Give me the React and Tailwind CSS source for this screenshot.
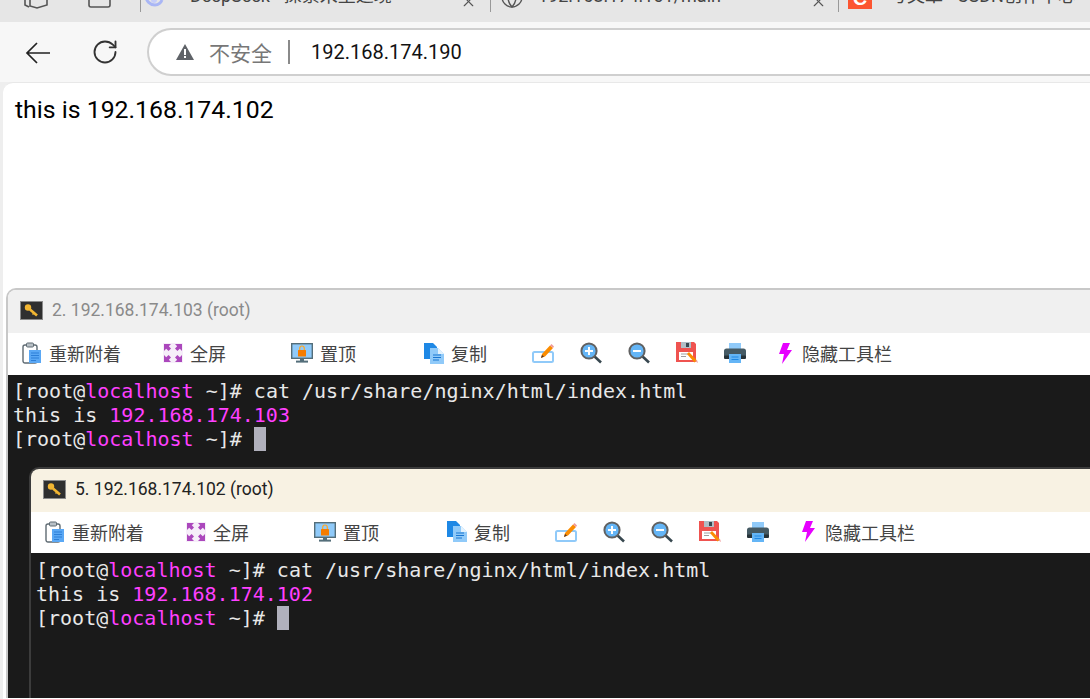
import { RotateCw, X, Globe } from "lucide-react";

const uiFont = "font-['Roboto','Noto_Sans_CJK_SC',sans-serif]";
const cjkFont = "font-['Noto_Sans_CJK_SC',sans-serif]";

function KeyIcon() {
  return (
    <svg width="23" height="19" viewBox="0 0 23 19" className="shrink-0">
      <rect x="0.5" y="0.5" width="22" height="18" fill="#2f2f2f" stroke="#8a8a8a" />
      <circle cx="8" cy="6.5" r="3.2" fill="#f2b632" />
      <path d="M10 8.5 L17 14.5" stroke="#f2b632" strokeWidth="2.6" />
      <path d="M14 12 L12.5 13.5" stroke="#f2b632" strokeWidth="1.5" />
    </svg>
  );
}

function ClipboardIcon() {
  return (
    <svg width="20" height="22" viewBox="0 0 20 22">
      <rect x="1" y="3" width="14" height="18" rx="2" fill="#fff" stroke="#5f6b73" strokeWidth="1.4" />
      <rect x="4.5" y="1" width="7" height="4" rx="1" fill="#b8c0c6" stroke="#5f6b73" />
      <rect x="7" y="8" width="12" height="13" fill="#5aa8f5" />
      <path d="M9 11h8M9 13.5h8M9 16h8M9 18.5h5" stroke="#2d7fd8" strokeWidth="1.1" />
    </svg>
  );
}

function FullscreenIcon() {
  return (
    <svg width="20" height="20" viewBox="0 0 20 20">
      <rect width="20" height="20" fill="#f6eef9" />
      <g fill="#ab47bc">
        <path d="M1 1h7L5.8 3.2 8 5.6 5.6 8 3.2 5.8 1 8z" />
        <path d="M19 1h-7l2.2 2.2L12 5.6 14.4 8l2.4-2.2L19 8z" />
        <path d="M1 19h7l-2.2-2.2L8 14.4 5.6 12l-2.4 2.2L1 12z" />
        <path d="M19 19h-7l2.2-2.2-2.2-2.4 2.4-2.4 2.4 2.2L19 12z" />
      </g>
    </svg>
  );
}

function PinIcon() {
  return (
    <svg width="22" height="20" viewBox="0 0 22 20">
      <rect x="0.7" y="0.7" width="20.6" height="14.6" fill="#90caf9" stroke="#546e7a" strokeWidth="1.4" />
      <rect x="9" y="15" width="4" height="3" fill="#546e7a" />
      <rect x="5" y="17.6" width="12" height="2" fill="#546e7a" />
      <rect x="7" y="7" width="8" height="6.5" rx="0.6" fill="#f57c00" />
      <path d="M8.7 7V5.3a2.3 2.3 0 0 1 4.6 0V7" fill="none" stroke="#ffa726" strokeWidth="1.2" />
    </svg>
  );
}

function CopyIcon() {
  return (
    <svg width="20" height="21" viewBox="0 0 20 21">
      <path d="M0 0h9l4 4v12H0z" fill="#1e88e5" />
      <path d="M6 5h8l6 6v10H6z" fill="#90caf9" />
      <path d="M14 5l6 6h-6z" fill="#e3f2fd" />
      <path d="M9 12h8M9 14.5h8M9 17h6" stroke="#1976d2" strokeWidth="1.1" />
    </svg>
  );
}

function EditIcon() {
  return (
    <svg width="22" height="20" viewBox="0 0 22 20">
      <rect x="1" y="9" width="20" height="10" rx="1.5" fill="#fff" stroke="#90caf9" strokeWidth="2" />
      <path d="M9 15l1-4L18 2.5l3 2.5-8 8.5z" fill="#fb8c00" />
      <path d="M18 2.5l1.5-1.5 2.5 2.5L21 5z" fill="#ef9a9a" />
      <path d="M9 15l1-3 2 1.5z" fill="#4e342e" />
    </svg>
  );
}

function ZoomIcon({ plus }) {
  return (
    <svg width="22" height="22" viewBox="0 0 22 22">
      <path d="M13.5 13.5L21 20.5" stroke="#37474f" strokeWidth="2.6" />
      <circle cx="9" cy="9" r="7.6" fill="#64b5f6" stroke="#616161" strokeWidth="2" />
      <rect x="5" y="8" width="8" height="2" fill="#fff" />
      {plus && <rect x="8" y="5" width="2" height="8" fill="#fff" />}
    </svg>
  );
}

function SaveIcon() {
  return (
    <svg width="22" height="22" viewBox="0 0 22 22">
      <path d="M0 0h18l2 2v18H0z" fill="#ef5350" />
      <rect x="5" y="0" width="10" height="6" fill="#b0bec5" />
      <rect x="10" y="1" width="3" height="4" fill="#37474f" />
      <rect x="3" y="10" width="14" height="8" fill="#fff" />
      <path d="M5 12h7M5 14.5h5" stroke="#9e9e9e" />
      <path d="M11 12l2-2 8 8.5-2.500 2z" fill="#fb8c00" />
      <path d="M19 19l2-1 1 3z" fill="#ef9a9a" />
    </svg>
  );
}

function PrintIcon() {
  return (
    <svg width="22" height="20" viewBox="0 0 22 20">
      <rect x="5" y="0" width="12" height="6" fill="#90caf9" />
      <path d="M2.5 5.5h17A2.5 2.5 0 0 1 22 8v7H0V8a2.5 2.5 0 0 1 2.5-2.5z" fill="#455a64" />
      <rect x="0" y="12.5" width="22" height="3.5" rx="1" fill="#263238" />
      <rect x="5" y="11" width="12" height="9" fill="#64b5f6" />
      <path d="M7.5 14h7M7.5 16.5h7" stroke="#1e88e5" />
    </svg>
  );
}

function BoltIcon() {
  return (
    <svg width="13" height="21" viewBox="0 0 13 21">
      <path d="M4 0h7L8 7h5L3 21l2-10H0z" fill="#e600ff" />
    </svg>
  );
}

const toolbarItems = [
  { icon: <ClipboardIcon />, label: "重新附着", width: "w-[141px]" },
  { icon: <FullscreenIcon />, label: "全屏", width: "w-[128px]" },
  { icon: <PinIcon />, label: "置顶", width: "w-[133px]" },
  { icon: <CopyIcon />, label: "复制", width: "w-[108px]" },
  { icon: <EditIcon />, width: "w-[48px]" },
  { icon: <ZoomIcon plus />, width: "w-[48px]" },
  { icon: <ZoomIcon />, width: "w-[48px]" },
  { icon: <SaveIcon />, width: "w-[48px]" },
  { icon: <PrintIcon />, width: "w-[55px]" },
  { icon: <BoltIcon />, label: "隐藏工具栏", width: "w-[120px] gap-[10px]" },
];

function Toolbar({ className }) {
  return (
    <div className={`flex items-center bg-white pb-[2px] ${className}`}>
      {toolbarItems.map((item, i) => (
        <div key={i} className={`flex shrink-0 items-center gap-[7px] ${item.width}`}>
          {item.icon}
          {item.label && (
            <span className={`${cjkFont} text-[18px] leading-none text-[#444] whitespace-nowrap`}>
              {item.label}
            </span>
          )}
        </div>
      ))}
    </div>
  );
}

function Terminal({ ip }) {
  const prompt = (
    <>
      <span className="text-[#e8e8e8]">[root@</span>
      <span className="text-[#ff40ff]">localhost</span>
      <span className="text-[#e8e8e8]"> ~]#</span>
    </>
  );
  return (
    <div className="font-['DejaVu_Sans_Mono',monospace] text-[20px] leading-[24px] whitespace-pre text-[#e8e8e8]">
      <div>
        {prompt} cat /usr/share/nginx/html/index.html
      </div>
      <div>
        this is <span className="text-[#ff40ff]">{ip}</span>
      </div>
      <div className="flex">
        {prompt}{" "}
        <span className="ml-[12px] inline-block h-[24px] w-[12px] bg-[#b0b0bc]" />
      </div>
    </div>
  );
}

function TabText({ children, width }) {
  return (
    <div className={`${uiFont} -mt-[16px] h-[24px] text-[18px] leading-[24px] text-[#444] whitespace-nowrap ${width}`}>
      {children}
    </div>
  );
}

export default function App() {
  return (
    <div className="h-[699px] w-[1090px] overflow-hidden bg-[#f7f7f7]">
      {/* cropped tab strip */}
      <div className="flex h-[22px] overflow-hidden bg-[#e6e6e6] text-[#555]">
        <svg width="140" height="22" viewBox="0 0 140 22" className="shrink-0">
          <g fill="none" stroke="#555" strokeWidth="1.6">
            <path d="M25 -4v9l4 2M30 -6v12l7 2 10-3V-6" />
            <path d="M89 -6v11a2 2 0 0 0 2 2h17a2 2 0 0 0 2-2V-6" />
          </g>
        </svg>
        <div className="h-[12px] w-px shrink-0 bg-[#999]" />
        <svg width="49" height="22" viewBox="0 0 49 22" className="shrink-0">
          <path d="M5 -4a9 9 0 0 0 9 9 8 8 0 0 0 7-5" fill="none" stroke="#a9b6f5" strokeWidth="3" />
          <circle cx="13" cy="0" r="3" fill="#c5cdf9" />
        </svg>
        <TabText width="w-[270px]">DeepSeek - 探索未至之境</TabText>
        <X size={17} strokeWidth={1.6} className="-mt-[7px] shrink-0" />
        <div className="ml-[13px] h-[12px] w-px shrink-0 bg-[#999]" />
        <Globe size={24} strokeWidth={1.4} className="ml-[9px] -mt-[15px] shrink-0" />
        <div className="w-[14px] shrink-0" />
        <TabText width="w-[272px]">192.168.174.101/main</TabText>
        <X size={17} strokeWidth={1.6} className="-mt-[7px] shrink-0" />
        <div className="ml-[11px] h-[12px] w-px shrink-0 bg-[#999]" />
        <div className="ml-[9px] flex h-[9px] w-[24px] shrink-0 items-end justify-center overflow-hidden bg-[#fc5531]">
          <span className="mb-[1px] font-['Liberation_Sans',sans-serif] text-[20px] leading-none font-bold text-white">C</span>
        </div>
        <div className="w-[17px] shrink-0" />
        <TabText width="w-[190px]">写文章 - CSDN创作中心</TabText>
      </div>

      {/* browser toolbar */}
      <div className="flex h-[60px] items-start bg-[#f7f7f7] pt-[6px]">
        <svg width="26" height="22" viewBox="0 0 26 22" fill="none" stroke="#222" strokeWidth="1.7" className="mt-[14px] ml-[25px] shrink-0">
          <path d="M25 11H2M12 1L2 11l10 10" />
        </svg>
        <RotateCw size={28} strokeWidth={1.6} className="mt-[10px] ml-[40px] text-[#333]" />
        <div className="ml-[28px] flex h-[48px] flex-1 items-center rounded-l-[24px] border-y-2 border-l-2 border-[#cfcfcf] bg-white pl-[27px]">
          <svg width="18" height="16" viewBox="0 0 18 16">
            <path d="M9 0l9 16H0z" fill="#5f6368" />
            <rect x="8" y="5" width="2" height="6" fill="#fff" />
            <rect x="8" y="12" width="2" height="2" fill="#fff" />
          </svg>
          <span className={`${cjkFont} ml-[15px] text-[21px] leading-none text-[#777]`}>不安全</span>
          <div className="ml-[16px] h-[24px] w-[2px] bg-[#8a8a8a]" />
          <span className={`${uiFont} ml-[21px] text-[20px] leading-none text-[#111]`}>192.168.174.190</span>
        </div>
      </div>

      {/* page */}
      <div className="h-[617px] pl-[3px] bg-[#eeeeee]">
        <div className="h-full rounded-tl-[10px] border-t border-[#e8e8e8] bg-white pl-[3px]">
          <div className={`${uiFont} -ml-[3px] h-[205px] pt-[10px] pl-[12px] text-[24.8px] leading-[34px] text-black`}>
            this is 192.168.174.102
          </div>

          {/* window 2 */}
          <div className="h-[410px] overflow-hidden rounded-tl-[10px] border-t-2 border-l-2 border-[#c8c8c8]">
            <div className={`${uiFont} flex h-[43px] items-center gap-[9px] bg-[#f0f0f0] pb-[2px] pl-[12px] text-[17.5px] text-[#8a8a8a]`}>
              <KeyIcon />
              2. 192.168.174.103 (root)
            </div>
            <Toolbar className="h-[42px] pl-[14px]" />
            <div className="h-full bg-[#1a1a1a] pt-[4px] pl-[5px]">
              <Terminal ip="192.168.174.103" />

              {/* window 5 */}
              <div className="mt-[16px] -ml-[5px] pl-[21px]">
                <div className="overflow-hidden rounded-tl-[10px] border-t-2 border-l-2 border-[#3c3c3c]">
                  <div className={`${uiFont} flex h-[43px] items-center gap-[9px] bg-[#f8f2e3] pb-[2px] pl-[12px] text-[17.5px] text-[#222]`}>
                    <KeyIcon />
                    5. 192.168.174.102 (root)
                  </div>
                  <Toolbar className="h-[41px] pl-[14px]" />
                  <div className="h-[160px] bg-[#1a1a1a] pt-[5px] pl-[5px]">
                    <Terminal ip="192.168.174.102" />
                  </div>
                </div>
              </div>
            </div>
          </div>
        </div>
      </div>
    </div>
  );
}
